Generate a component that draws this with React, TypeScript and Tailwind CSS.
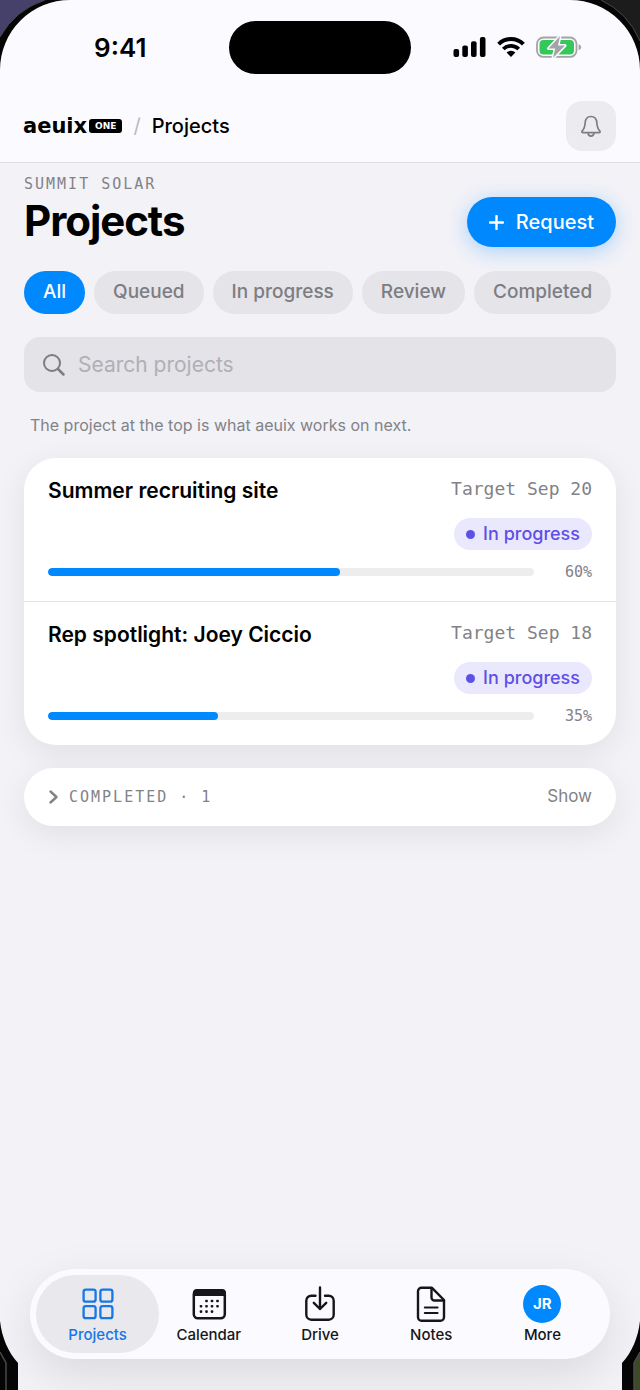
import { FC, ReactNode } from 'react'
import classNames from 'clsx'

type Project = {
    title: string
    target: string
    status: string
    progress: number
}

const filters = ['All', 'Queued', 'In progress', 'Review', 'Completed']

const projects: Project[] = [
    { title: 'Summer recruiting site', target: 'Target Sep 20', status: 'In progress', progress: 60 },
    { title: 'Rep spotlight: Joey Ciccio', target: 'Target Sep 18', status: 'In progress', progress: 35 },
]

const mono = "font-['DejaVu_Sans_Mono',monospace]"

const SignalIcon = () => (
    <svg width="33" height="20" viewBox="0 0 33 20" fill="#000" aria-hidden="true">
        <rect x="0.5" y="12" width="5.600" height="8" rx="2" />
        <rect x="9.300" y="8.500" width="5.600" height="11.500" rx="2" />
        <rect x="18" y="4.300" width="5.600" height="15.700" rx="2" />
        <rect x="26.900" y="0" width="5.600" height="20" rx="2" />
    </svg>
)

const WifiIcon = () => (
    <svg width="28" height="20" viewBox="0 0 28 20" aria-hidden="true">
        <path d="M1.600 7.200a17.600 17.600 0 0 1 24.800 0" fill="none" stroke="#000" strokeWidth="4" />
        <path d="M6.300 12a11 11 0 0 1 15.400 0" fill="none" stroke="#000" strokeWidth="3.800" />
        <path d="M9.600 15.600a6.300 6.300 0 0 1 8.800 0L14 20z" fill="#000" />
    </svg>
)

const BatteryIcon = () => (
    <svg width="46" height="24" viewBox="0 0 46 24" aria-hidden="true">
        <rect x="1" y="2.500" width="39.500" height="19.400" rx="6.500" fill="none" stroke="#a3a3a8" strokeWidth="1.800" />
        <path d="M42.600 9.200c1.600.6 2.500 1.700 2.500 3s-.9 2.400-2.500 3z" fill="#a3a3a8" />
        <rect x="3.500" y="4.900" width="34.500" height="14.600" rx="4" fill="#34c759" />
        <path
            d="M24 1 L12.500 13.500 H19.200 L17 23 L29 10.600 H22 Z"
            fill="#a3a3a8"
            stroke="#fbfbff"
            strokeWidth="3"
            strokeLinejoin="round"
            paintOrder="stroke"
        />
    </svg>
)

const BellIcon = () => (
    <svg width="22" height="24" viewBox="0 0 22 24" fill="none" stroke="#7c7c81" strokeWidth="1.700" aria-hidden="true">
        <path
            d="M11 2.500c-3.600 0-5.500 2.600-5.800 6-.3 4.500-1.200 6.600-2.900 8.300-.8 1-.4 1.900.8 1.900h15.800c1.200 0 1.600-.9.8-1.900-1.700-1.700-2.600-3.800-2.900-8.300-.3-3.400-2.200-6-5.800-6z"
            strokeLinejoin="round"
        />
        <path d="M8 19.200c.2 1.800 1.400 2.900 3 2.900s2.800-1.100 3-2.900" />
    </svg>
)

const GridIcon = () => (
    <svg width="38" height="38" viewBox="0 0 38 38" fill="none" stroke="#1677e6" strokeWidth="2.300" aria-hidden="true">
        <rect x="4.600" y="4.600" width="12" height="12" rx="2.200" />
        <rect x="21.400" y="4.600" width="12" height="12" rx="2.200" />
        <rect x="4.600" y="21.200" width="12" height="12" rx="2.200" />
        <rect x="21.400" y="21.200" width="12" height="12" rx="2.200" />
    </svg>
)

const CalendarIcon = () => (
    <svg width="38" height="38" viewBox="0 0 38 38" fill="#16161a" aria-hidden="true">
        <rect x="3.800" y="5.200" width="31" height="28" rx="4" fill="none" stroke="#16161a" strokeWidth="2.500" />
        <path d="M3 11V8a4 4 0 0 1 4-4h25a4 4 0 0 1 4 4v3z" />
        {[16, 21.300, 26.600].map((y, row) =>
            [11, 16.500, 22, 27.500].map((x, col) =>
                (row === 0 && col === 0) || (row === 2 && col === 3) ? null : (
                    <rect key={`${x}-${y}`} x={x - 1.300} y={y - 1.300} width="2.600" height="2.600" rx="0.800" />
                )
            )
        )}
    </svg>
)

const DriveIcon = () => (
    <svg
        width="38"
        height="38"
        viewBox="0 0 38 38"
        fill="none"
        stroke="#16161a"
        strokeWidth="2.400"
        strokeLinecap="round"
        strokeLinejoin="round"
        aria-hidden="true"
    >
        <path d="M14.500 10.700h-4.200a5 5 0 0 0-5 5v14a5 5 0 0 0 5 5h17.400a5 5 0 0 0 5-5v-14a5 5 0 0 0-5-5H24" />
        <path d="M19 2.500v21.500M12.800 17.800L19 24l6.200-6.200" />
    </svg>
)

const NotesIcon = () => (
    <svg
        width="38"
        height="38"
        viewBox="0 0 38 38"
        fill="none"
        stroke="#16161a"
        strokeWidth="2.400"
        strokeLinecap="round"
        strokeLinejoin="round"
        aria-hidden="true"
    >
        <path d="M20 2.800H9.500A3.500 3.500 0 0 0 6 6.300v26a3.500 3.500 0 0 0 3.500 3.500h19a3.500 3.500 0 0 0 3.500-3.500V15L20 2.800z" />
        <path d="M19.500 3.500v9a3 3 0 0 0 3 3H32" />
        <path d="M12.800 22.500h12.800M12.800 28h12.800" strokeWidth="2" />
    </svg>
)

const Avatar = () => (
    <span className="flex size-[38px] items-center justify-center rounded-full bg-[#0088ff] text-[15px] font-bold text-white">
        JR
    </span>
)

const Bezel = () => (
    <>
        <svg className="absolute top-0 left-0" width="70" height="70" viewBox="0 0 70 70" aria-hidden="true">
            <path d="M0 0H70A70 70 0 0 0 0 70z" fill="#050506" />
            <path d="M0 0H45A80 80 0 0 0 0 37z" fill="#45416a" />
            <path d="M45 0A80 80 0 0 0 0 37" fill="none" stroke="#4a4a50" />
        </svg>
        <svg className="absolute top-0 right-0" width="70" height="70" viewBox="0 0 70 70" aria-hidden="true">
            <path d="M70 0H0A70 70 0 0 1 70 70z" fill="#050506" />
            <path d="M70 0H31A80 80 0 0 1 70 41z" fill="#1c1c1d" />
            <path d="M31 0A80 80 0 0 1 70 41" fill="none" stroke="#4a4a4c" />
        </svg>
        <svg className="absolute bottom-0 left-0" width="18" height="70" viewBox="0 0 18 70" aria-hidden="true">
            <path d="M0 1C2 18 8 32 18 43V70H0z" fill="#050506" />
            <path d="M0 32L6 43V70" fill="none" stroke="#4a4a4c" strokeWidth="1.500" />
        </svg>
        <svg className="absolute right-0 bottom-0" width="18" height="70" viewBox="0 0 18 70" aria-hidden="true">
            <path d="M18 1C16 18 10 32 0 43V70H18z" fill="#050506" />
            <path d="M18 32L12 43V70H18z" fill="#3c4a26" />
            <path d="M18 32L12 43V70" fill="none" stroke="#4a4a4c" strokeWidth="1.500" />
        </svg>
    </>
)

const StatusBar = () => (
    <div className="grid h-[94px] grid-cols-3 items-center">
        <div className="pl-[94px] text-[26px] font-semibold">9:41</div>
        <div className="h-[53px] w-[182px] justify-self-center rounded-full bg-black" />
        <div className="flex items-center justify-end gap-[11px] pr-[58px]">
            <SignalIcon />
            <WifiIcon />
            <BatteryIcon />
        </div>
    </div>
)

const Header = () => (
    <header className="border-b border-[#dcdce2] bg-[#fbfbff]">
        <StatusBar />
        <div className="flex h-[68px] items-center pr-6 pb-1 pl-[23px]">
            <a href="#" className="flex items-center gap-[2px] font-['DejaVu_Sans',sans-serif] font-bold">
                <span className="text-[21px] leading-6">aeuix</span>
                <span className="rounded-[3px] bg-black px-[6px] text-[9px] leading-[14px] text-white">ONE</span>
            </a>
            <span className="px-[11px] text-xl text-[#b9b9be]">/</span>
            <span className="text-xl font-medium">Projects</span>
            <button
                type="button"
                aria-label="Notifications"
                className="ml-auto flex size-[50px] items-center justify-center rounded-2xl bg-[#ececf0]"
            >
                <BellIcon />
            </button>
        </div>
    </header>
)

const ProjectRow: FC<{ project: Project }> = ({ project }) => (
    <li className="px-6 pt-[18px] pb-[19px]">
        <div className="flex items-start justify-between">
            <h2 className="text-[21px] leading-[30px] font-semibold">{project.title}</h2>
            <span className={classNames(mono, 'text-lg leading-[26px] text-[#828287]')}>{project.target}</span>
        </div>
        <div className="mt-3 flex justify-end">
            <span className="flex h-8 items-center gap-2 rounded-full bg-[#eae8fc] px-3 text-lg font-medium text-[#5d50e6]">
                <span className="size-[9px] rounded-full bg-[#5d50e6]" />
                {project.status}
            </span>
        </div>
        <div className="mt-3 flex items-center">
            <div className="h-2 flex-1 overflow-hidden rounded-full bg-[#ededee]">
                <div className="h-full rounded-full bg-[#0088ff]" style={{ width: `${project.progress}%` }} />
            </div>
            <span className={classNames(mono, 'w-[58px] text-right text-[15px] leading-5 text-[#828287]')}>
                {project.progress}%
            </span>
        </div>
    </li>
)

const Tab: FC<{ label: string; active?: boolean; children: ReactNode }> = ({ label, active, children }) => (
    <a
        href="#"
        className={classNames(
            'relative flex h-[78px] flex-1 flex-col items-center gap-[2px] pt-[10px] text-[15px] leading-5 font-medium',
            active ? 'text-[#1677e6]' : 'text-[#16161a]'
        )}
    >
        {active && <span className="absolute inset-y-0 -inset-x-[6px] rounded-full bg-[#e8e8ed]" />}
        <span className="relative">{children}</span>
        <span className="relative">{label}</span>
    </a>
)

export default function App() {
    return (
        <div className="relative flex min-h-screen flex-col overflow-hidden bg-[#f2f2f7] font-[Inter,sans-serif] text-black">
            <Header />

            <main className="flex-1 px-6">
                <div className="flex items-end justify-between pt-[10px]">
                    <div>
                        <p className={classNames(mono, 'text-[15px] leading-[22px] tracking-[2px] text-[#828287]')}>
                            SUMMIT SOLAR
                        </p>
                        <h1 className="text-[42px] leading-[52px] font-bold tracking-tight">Projects</h1>
                    </div>
                    <button
                        type="button"
                        className="flex h-[50px] items-center gap-3 rounded-full bg-[#0088ff] px-[22px] text-xl font-medium text-white shadow-[0_4px_20px_rgba(0,136,255,0.3)]"
                    >
                        <svg width="15" height="15" viewBox="0 0 15 15" aria-hidden="true">
                            <path d="M7.500 1v13M1 7.500h13" stroke="#fff" strokeWidth="2.400" strokeLinecap="round" />
                        </svg>
                        Request
                    </button>
                </div>

                <div className="mt-6 flex gap-[9px]">
                    {filters.map((filter, i) => (
                        <button
                            key={filter}
                            type="button"
                            className={classNames(
                                'h-[43px] rounded-full px-[19px] text-[19px] font-medium whitespace-nowrap',
                                i === 0 ? 'bg-[#0088ff] text-white' : 'bg-[#e4e4e9] text-[#7d7d82]'
                            )}
                        >
                            {filter}
                        </button>
                    ))}
                </div>

                <label className="mt-[23px] flex h-[55px] items-center gap-3 rounded-2xl bg-[#e3e3e8] px-[18px]">
                    <svg width="24" height="24" viewBox="0 0 24 24" fill="none" stroke="#7c7c81" aria-hidden="true">
                        <circle cx="10" cy="10" r="8" strokeWidth="2" />
                        <path d="M16 16l5.500 5.500" strokeWidth="2.500" strokeLinecap="round" />
                    </svg>
                    <input
                        type="search"
                        aria-label="Search projects"
                        placeholder="Search projects"
                        className="min-w-0 flex-1 bg-transparent text-[21px] outline-none placeholder:text-[#b0b0b5]"
                    />
                </label>

                <p className="mt-[21px] pl-[6px] text-base leading-6 text-[#828287]">
                    The project at the top is what aeuix works on next.
                </p>

                <ul className="mt-[21px] divide-y divide-[#e4e4e6] rounded-[32px] bg-white shadow-[0_8px_32px_rgba(0,0,0,0.08)]">
                    {projects.map((project) => (
                        <ProjectRow key={project.title} project={project} />
                    ))}
                </ul>

                <button
                    type="button"
                    className="mt-[23px] flex h-[58px] w-full items-center rounded-full bg-white px-6 text-[#828287] shadow-[0_8px_32px_rgba(0,0,0,0.08)]"
                >
                    <svg width="12" height="16" viewBox="0 0 12 16" fill="none" aria-hidden="true">
                        <path
                            d="M2.500 2.500l6 5.500-6 5.500"
                            stroke="#828287"
                            strokeWidth="2.400"
                            strokeLinecap="round"
                            strokeLinejoin="round"
                        />
                    </svg>
                    <span className={classNames(mono, 'pl-[9px] text-[15px] tracking-[2px]')}>COMPLETED · 1</span>
                    <span className="ml-auto text-[17px]">Show</span>
                </button>
            </main>

            <nav className="mx-[30px] mb-[31px] flex rounded-full bg-[#fbfbff] px-3 py-[6px] shadow-[0_16px_48px_rgba(0,0,0,0.1)]">
                <Tab label="Projects" active>
                    <GridIcon />
                </Tab>
                <Tab label="Calendar">
                    <CalendarIcon />
                </Tab>
                <Tab label="Drive">
                    <DriveIcon />
                </Tab>
                <Tab label="Notes">
                    <NotesIcon />
                </Tab>
                <Tab label="More">
                    <Avatar />
                </Tab>
            </nav>

            <Bezel />
        </div>
    )
}
